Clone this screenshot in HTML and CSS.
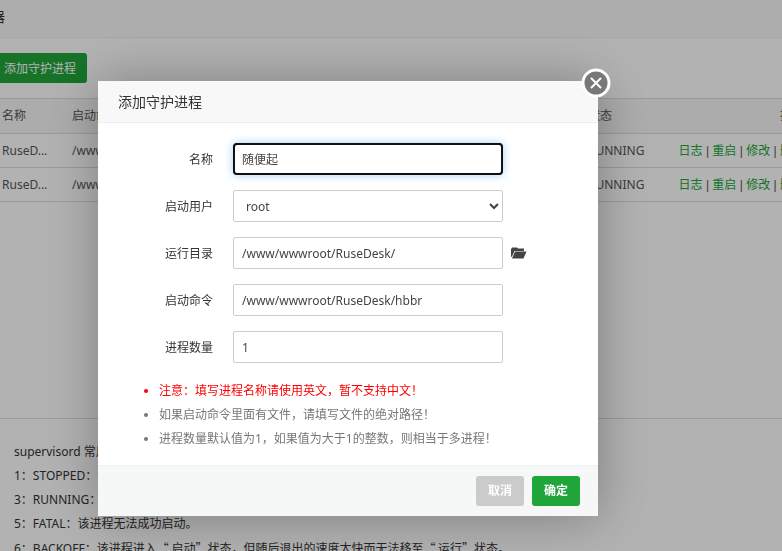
FILE: index.html
```html
<!DOCTYPE html>
<html lang="zh-CN">
<head>
<meta charset="utf-8">
<title>添加守护进程</title>
<link rel="stylesheet" href="styles.css">
</head>
<body>
<main class="page">
  <header class="page-title">器</header>
  <div class="toolbar"><button class="btn btn-primary btn-add" type="button">添加守护进程</button></div>
  <div class="table-wrap">
    <table class="table">
      <colgroup><col class="col-name"><col class="col-command"><col class="col-status"><col></colgroup>
      <thead><tr><th>名称</th><th>启动命令</th><th>状态</th><th class="actions">操作</th></tr></thead>
      <tbody>
        <tr><td>RuseD...</td><td>/www/wwwroot/RuseDesk/hbbs</td><td>RUNNING</td><td class="actions"><a href="#">日志</a> | <a href="#">重启</a> | <a href="#">修改</a> | <a href="#">删除</a></td></tr>
        <tr><td>RuseD...</td><td>/www/wwwroot/RuseDesk/hbbr</td><td>RUNNING</td><td class="actions"><a href="#">日志</a> | <a href="#">重启</a> | <a href="#">修改</a> | <a href="#">删除</a></td></tr>
      </tbody>
    </table>
  </div>
  <section class="notes">
    <p>supervisord 常用状态说明：</p>
    <p>1：STOPPED：该进程已停止。</p>
    <p>3：RUNNING：该进程正在运行。</p>
    <p>5：FATAL：该进程无法成功启动。</p>
    <p>6：BACKOFF：<span class="cjk">该进程进入“ 启动”状态，但随后退出的速度太快而无法移至“ 运行”状态。</span></p>
  </section>
</main>
<div class="overlay">
  <form class="dialog" role="dialog" aria-labelledby="dialog-title">
    <h2 class="dialog-title" id="dialog-title">添加守护进程</h2>
    <button class="close" type="button" aria-label="关闭">
      <svg viewBox="0 0 30 30" width="30" height="30"><circle cx="15" cy="15" r="13" fill="#787878" stroke="#fff" stroke-width="3"/><path d="M10.5 10.5l9 9M19.5 10.5l-9 9" stroke="#fff" stroke-width="2" stroke-linecap="round"/></svg>
    </button>
    <div class="dialog-body">
      <div class="field"><label for="name">名称</label><input id="name" type="text" value="随便起" autofocus></div>
      <div class="field"><label for="user">启动用户</label><select id="user"><option>root</option></select></div>
      <div class="field"><label for="dir">运行目录</label><input id="dir" type="text" value="/www/wwwroot/RuseDesk/">
        <button class="browse" type="button" aria-label="选择目录"><svg viewBox="0 0 16 12" width="16" height="12"><path fill="#444" d="M0 10V1.500h1V.5h5l1 1h6v2.500H3.500L1 9.500z"/><path fill="#444" d="M4 4.500H15.500L12.500 11.500H1z"/></svg></button></div>
      <div class="field"><label for="command">启动命令</label><input id="command" type="text" value="/www/wwwroot/RuseDesk/hbbr"></div>
      <div class="field"><label for="count">进程数量</label><input id="count" type="text" value="1"></div>
      <ul class="tips">
        <li class="warning">注意：填写进程名称请使用英文，暂不支持中文！</li>
        <li>如果启动命令里面有文件，请填写文件的绝对路径！</li>
        <li>进程数量默认值为1，如果值为大于1的整数，则相当于多进程！</li>
      </ul>
    </div>
    <footer class="dialog-footer">
      <button class="btn btn-cancel" type="button">取消</button>
      <button class="btn btn-primary" type="submit">确定</button>
    </footer>
  </form>
</div>
</body>
</html>
```
FILE: styles.css
```css
* { box-sizing: border-box; }
body {
  margin: 0;
  overflow: hidden;
  background: #fff;
  color: #333;
  font: 12px/24px "Noto Sans", "Noto Sans CJK SC", sans-serif;
}
button, input, select { font: inherit; color: inherit; }

.page { height: 100vh; overflow: hidden; margin: 0 -30px 0 -14px; }
.page-title {
  height: 38px;
  padding-left: 5px;
  background: #f8f8f8;
  border-bottom: 1px solid #eee;
  font-size: 14px;
  line-height: 34px;
}
.toolbar { padding: 15px 7px; }
.btn {
  min-width: 48px;
  height: 30px;
  padding: 0 12px;
  border: 0;
  border-radius: 3px;
  color: #fff;
  line-height: 30px;
}
.btn-primary { background: #20a53a; }
.btn-cancel { background: #cbcbcb; }
.btn-add { padding: 2px 11px 0; line-height: 28px; }

.table-wrap { min-height: 320px; }
.table { width: 100%; border-collapse: collapse; table-layout: fixed; color: #555; }
.col-name { width: 78px; }
.col-command { width: 516px; }
.col-status { width: 80px; }
.table th, .table td { height: 34px; padding: 0 8px; border: 1px solid #ddd; border-width: 1px 0; font-weight: 400; text-align: left; white-space: nowrap; }
.table th { height: 35px; background: #f6f6f6; }
.table th:first-child, .table td:first-child { padding-left: 16px; }
.table .actions { font-family: "Liberation Sans", "Noto Sans CJK SC", sans-serif; text-align: right; }
.table a { color: #20a53a; text-decoration: none; }

.notes { padding: 21px 28px; border-top: 1px solid #ddd; }
.notes p { margin: 0; white-space: nowrap; }
.cjk { font-family: "Noto Sans CJK SC", sans-serif; }

.overlay {
  position: fixed;
  inset: 0;
  display: flex;
  align-items: flex-start;
  justify-content: center;
  padding: 81px 86px 0 0;
  background: rgba(0, 0, 0, .3);
}
.dialog {
  position: relative;
  width: 500px;
  background: #fff;
  box-shadow: 1px 1px 50px rgba(0, 0, 0, .3);
}
.dialog-title {
  margin: 0;
  padding: 0 20px;
  background: #f8f8f8;
  border-bottom: 1px solid #eee;
  font-size: 14px;
  font-weight: 400;
  line-height: 41px;
}
.close { position: absolute; top: -13px; right: -13px; padding: 0; border: 0; background: none; line-height: 0; }
.dialog-body { padding: 20px 0 14px; }
.field { display: flex; align-items: center; margin-bottom: 15px; }
.field label { width: 135px; padding: 2px 20px 0 0; text-align: right; }
.field input, .field select {
  width: 270px;
  height: 32px;
  padding: 0 8px;
  border: 1px solid #ccc;
  border-radius: 2px;
  background: #fff;
  color: #444;
}
.field input:focus { border-color: #101010; border-radius: 4px; outline: 2px solid #101010; outline-offset: -2px; box-shadow: 0 0 8px rgba(102, 175, 233, .6); }
.browse { margin-left: 8px; padding: 0; border: 0; background: none; line-height: 0; }
.tips { margin: 16px 0 0; padding-left: 61px; color: #777; }
.warning { color: red; }
.dialog-footer {
  display: flex;
  justify-content: flex-end;
  gap: 8px;
  padding: 10px 18px;
  background: #f6f8f8;
  border-top: 1px solid #edf1f2;
}
.dialog-footer .btn { font-weight: 700; }
```
